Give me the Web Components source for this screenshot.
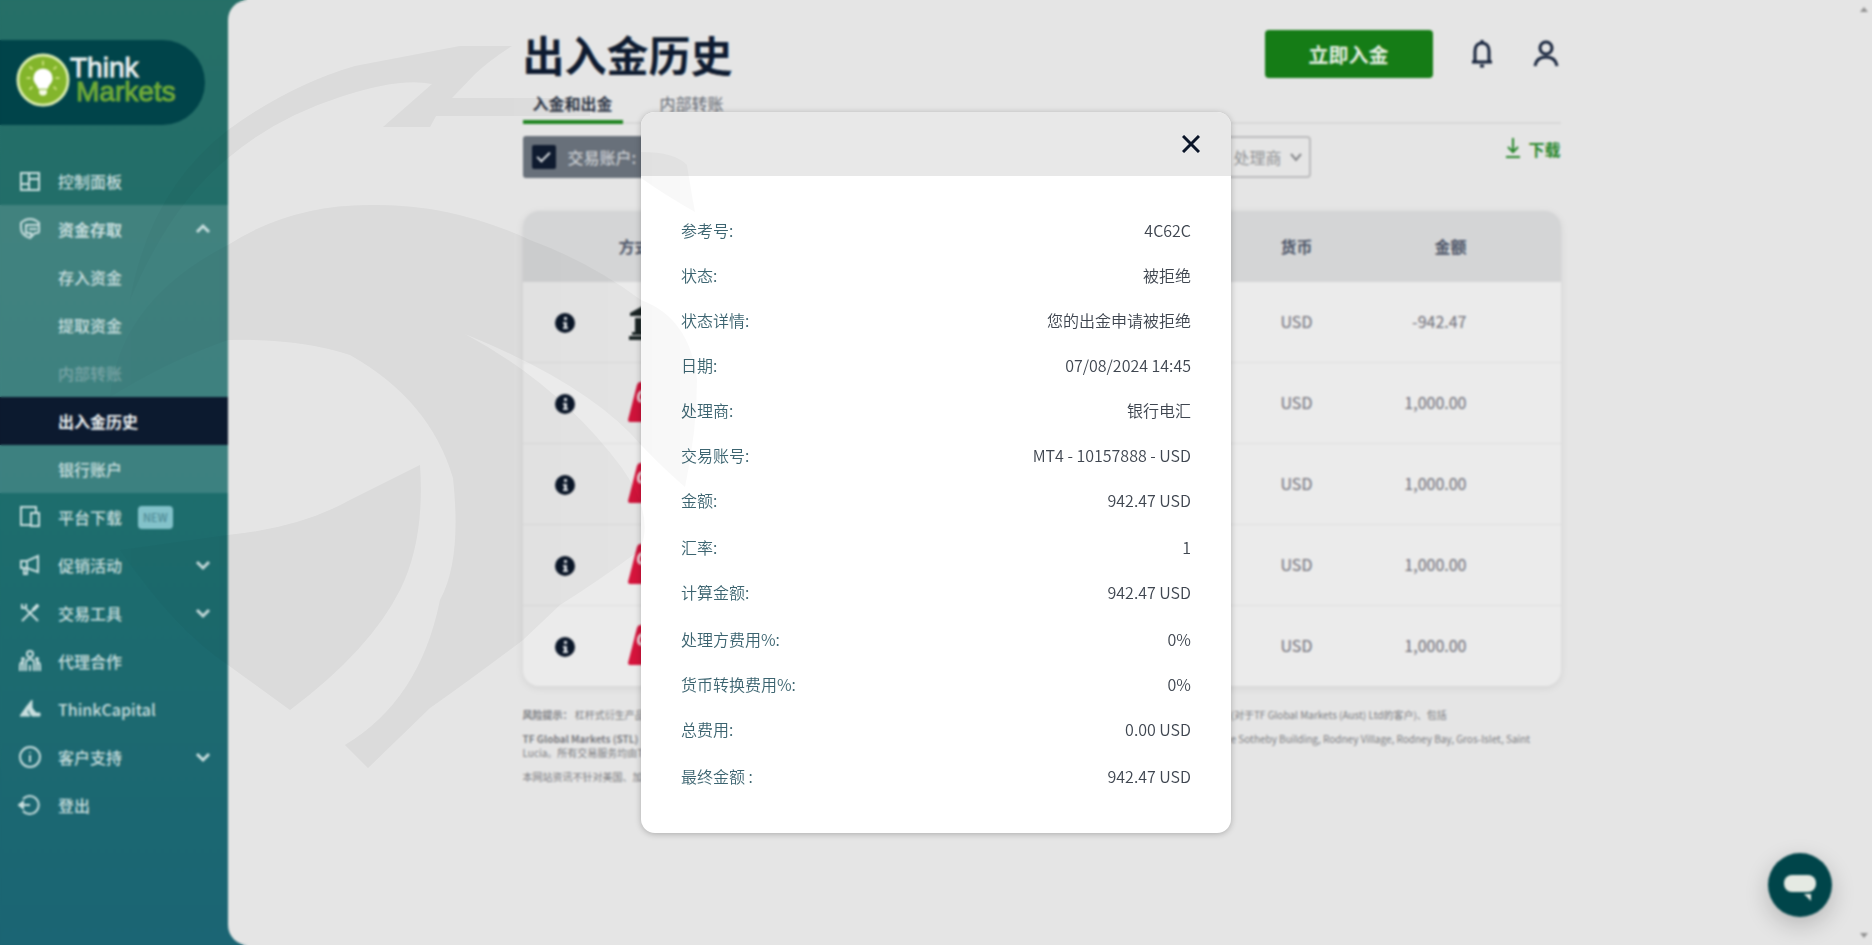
<!DOCTYPE html>
<html lang="zh-CN">
<head>
<meta charset="utf-8">
<title>出入金历史</title>
<style>
  body {
    margin: 0;
    font-family: "Noto Sans CJK SC", "Noto Sans", sans-serif;
    font-size: 16px;
    background: #206c6b;
  }
</style>
</head>
<body>
<app-shell>
  <app-sidebar slot="sidebar">
    <nav-item icon="panel" text="控制面板"></nav-item>
    <nav-item icon="funds" text="资金存取" arrow="up" group></nav-item>
    <nav-item text="存入资金" group></nav-item>
    <nav-item text="提取资金" group></nav-item>
    <nav-item text="内部转账" group disabled></nav-item>
    <nav-item text="出入金历史" active></nav-item>
    <nav-item text="银行账户" group></nav-item>
    <nav-item icon="platform" text="平台下载"><span>NEW</span></nav-item>
    <nav-item icon="promo" text="促销活动" arrow="down"></nav-item>
    <nav-item icon="tools" text="交易工具" arrow="down"></nav-item>
    <nav-item icon="people" text="代理合作"></nav-item>
    <nav-item icon="capital" text="ThinkCapital"></nav-item>
    <nav-item icon="info" text="客户支持" arrow="down"></nav-item>
    <nav-item icon="logout" text="登出"></nav-item>
  </app-sidebar>
  <page-header titulo="出入金历史"></page-header>
  <tab-bar></tab-bar>
  <filter-bar></filter-bar>
  <history-table></history-table>
  <risk-notice></risk-notice>
  <chat-button slot="chat"></chat-button>
</app-shell>

<detail-dialog>
  <detail-row label="参考号:">4C62C</detail-row>
  <detail-row label="状态:">被拒绝</detail-row>
  <detail-row label="状态详情:">您的出金申请被拒绝</detail-row>
  <detail-row label="日期:">07/08/2024 14:45</detail-row>
  <detail-row label="处理商:">银行电汇</detail-row>
  <detail-row label="交易账号:">MT4 - 10157888 - USD</detail-row>
  <detail-row label="金额:">942.47 USD</detail-row>
  <detail-row label="汇率:" spaced>1</detail-row>
  <detail-row label="计算金额:">942.47 USD</detail-row>
  <detail-row label="处理方费用%:" spaced>0%</detail-row>
  <detail-row label="货币转换费用%:">0%</detail-row>
  <detail-row label="总费用:">0.00 USD</detail-row>
  <detail-row label="最终金额 :" spaced>942.47 USD</detail-row>
</detail-dialog>
<water-mark></water-mark>

<script>
const icons = {
  panel: '<path d="M3 4h18v17H3zM11 4v17M11 10h10M3 15h8"/>',
  funds: '<path d="M12 21c-6-2-9-5-9-10V6c3-3 6-4 9-4s6 1 9 4v2M8 16V8h12q1 0 1 2v4q0 2-2 2h-2l-4 4v-4z"/><path d="M11 12h8"/>',
  platform: '<path d="M12 20H3V2h15v5M13 8h8v13h-8z"/>',
  promo: '<path d="M3 8h6l11-5v16L9 15H3zM9 8v7M6 15v6h3v-5"/>',
  tools: '<path d="M8 8l12 12M4 3v4h4V3M4 20l11-11"/><path d="M14 8l5-5 2 2-5 5z" fill="currentColor" stroke-width="1"/>',
  people: '<circle cx="12" cy="5" r="3"/><circle cx="5" cy="10" r="1"/><circle cx="19" cy="10" r="1"/><path d="M8 22v-8c0-5 8-5 8 0v8M12 22v-6M2 22v-5c0-2 1-4 3-4v9M22 22v-5c0-2-1-4-3-4v9"/>',
  capital: '<path d="M2 19L9 9l2 2-2 4 3 4zM9 9l5-6v8l4 5h4v3h-8l-3-5" fill="currentColor" stroke-width="1"/>',
  info: '<circle cx="12" cy="12" r="10"/><path d="M12 10v7M12 7v1"/>',
  logout: '<path d="M5 6a9 9 0 1 1 0 12M2 12h10"/><path d="M1 12l4-3v6z" fill="currentColor"/>'
};

class AppShell extends HTMLElement {
  constructor() {
    super();
    this.attachShadow({ mode: "open" });
    this.shadowRoot.innerHTML = `
      <style>
        :host {
          display: grid;
          grid-template-columns: 228px 1fr;
          min-height: 100vh;
          background: linear-gradient(#266f67, #1d6d6d 55%, #1b6574);
        }
        main {
          display: grid;
          grid-template-columns: 1fr 17px;
          background: #e5e5e5;
          border-radius: 20px 0 0 20px;
        }
        .content {
          width: 100%;
          max-width: 1038px;
          margin: 0 auto;
        }
        .scroll {
          display: flex;
          flex-direction: column;
          justify-content: space-between;
          align-items: center;
          padding: 6px 0;
        }
        .scroll svg { width: 8px; height: 6px; fill: #929292; }
        .chat { position: fixed; right: 40px; bottom: 28px; }
      </style>
      <slot name="sidebar"></slot>
      <main>
        <div class="content"><slot></slot></div>
        <div class="scroll">
          <svg viewBox="0 0 8 6"><path d="M0 6l4-5 4 5z"/></svg>
          <svg viewBox="0 0 8 6"><path d="M0 0l4 5 4-5z"/></svg>
        </div>
      </main>
      <div class="chat"><slot name="chat"></slot></div>
    `;
  }
}
customElements.define('app-shell', AppShell);

class AppSidebar extends HTMLElement {
  constructor() {
    super();
    this.attachShadow({ mode: "open" });
    this.shadowRoot.innerHTML = `
      <style>
        :host { display: block; }
        .logo {
          display: flex;
          align-items: center;
          box-sizing: border-box;
          width: 205px;
          height: 85px;
          margin: 40px 0 32px;
          padding: 0 0 6px 16px;
          border-radius: 0 43px 43px 0;
          background: #00444a;
        }
        .logo svg { width: 54px; height: 54px; flex: none; }
        .name {
          display: flex;
          flex-direction: column;
          font-family: "Liberation Sans", Arial, sans-serif;
          font-size: 28px;
          line-height: 24px;
          color: #e6eeee;
          -webkit-text-stroke: 1px currentColor;
        }
        .name b { color: #6fa938; font-weight: normal; margin-left: 6px; }
      </style>
      <div class="logo">
        <svg viewBox="0 0 56 56">
          <circle cx="28" cy="28" r="26" fill="#83b52b" stroke="#d9ecae" stroke-width="3"/>
          <path d="M28 16a10 10 0 0 1 10 10c0 5-4 7-5 11h-10c-1-4-5-6-5-11a10 10 0 0 1 10-10z" fill="#fff"/>
          <path d="M24 38h8v4l-2 2h-4l-2-2z" fill="#f5fae5"/>
          <path d="M28 8v5M14 14l3 3M42 14l-3 3M11 26h4M41 26h4M14 38l3-3M42 38l-3-3" stroke="#c9e07a" stroke-width="2"/>
        </svg>
        <div class="name"><span>Think</span><b>Markets</b></div>
      </div>
      <nav><slot></slot></nav>
    `;
  }
}
customElements.define('app-sidebar', AppSidebar);

class NavItem extends HTMLElement {
  constructor() {
    super();
    this.attachShadow({ mode: "open" });
  }

  connectedCallback() {
    const icon = this.getAttribute("icon");
    const arrow = this.getAttribute("arrow");
    this.shadowRoot.innerHTML = `
      <style>
        :host { display: block; color: #c9dfdf; }
        :host([group]) { background: rgba(255, 255, 255, .14); }
        :host([active]) { background: #0c1a2f; color: #eef2f4; }
        :host([disabled]) a { color: #78a3a5; }
        a {
          display: flex;
          align-items: center;
          height: 48px;
          padding: 0 16px 0 18px;
          color: inherit;
          font-weight: 500;
          text-decoration: none;
        }
        :host([active]) a, :host([arrow="up"]) a { font-weight: 700; }
        svg { fill: none; stroke: currentColor; stroke-width: 2; flex: none; }
        .icon { width: 24px; height: 24px; margin-right: 16px; }
        .arrow { width: 18px; height: 18px; margin-left: auto; stroke-width: 3; }
        ::slotted(span) {
          margin-left: 16px;
          padding: 0 5px;
          border-radius: 4px;
          background: #83c2ca;
          color: #4d8893;
          font-size: 11px;
          line-height: 23px;
        }
      </style>
      <a href="#">
        <svg class="icon" viewBox="0 0 24 24">${icon ? icons[icon] : ""}</svg>
        ${this.getAttribute("text")}
        <slot></slot>
        ${arrow ? `<svg class="arrow" viewBox="0 0 18 18"><path d="${arrow === "up" ? "M3 12l6-6 6 6" : "M3 6l6 6 6-6"}"/></svg>` : ""}
      </a>
    `;
  }
}
customElements.define('nav-item', NavItem);

class PageHeader extends HTMLElement {
  constructor() {
    super();
    this.attachShadow({ mode: "open" });
  }

  connectedCallback() {
    this.shadowRoot.innerHTML = `
      <style>
        :host {
          display: flex;
          align-items: center;
          padding-top: 24px;
          height: 60px;
        }
        h1 { margin: 0; color: #0e1b30; font-size: 42px; font-weight: 700; line-height: 60px; }
        button { border: none; font-family: inherit; cursor: pointer; }
        .deposit {
          width: 168px;
          height: 48px;
          margin: 0 34px 0 auto;
          border-radius: 4px;
          background: #157c16;
          color: #e6f0e4;
          font-size: 20px;
          font-weight: 700;
        }
        .icon { width: 30px; height: 30px; padding: 0; background: none; color: #14213a; }
        .user { margin-left: 34px; }
        svg { width: 28px; height: 30px; fill: none; stroke: currentColor; stroke-width: 3; }
      </style>
      <h1>${this.getAttribute("titulo")}</h1>
      <button class="deposit">立即入金</button>
      <button class="icon" aria-label="通知">
        <svg viewBox="0 0 28 30"><path d="M4 23h20M7 23v-11c0-5 3-8 7-8s7 3 7 8v11M14 1v3M12 27h4"/></svg>
      </button>
      <button class="icon user" aria-label="账户">
        <svg viewBox="0 0 28 30"><circle cx="14" cy="9" r="6"/><path d="M3 27c1-6 5-9 11-9s10 3 11 9"/></svg>
      </button>
    `;
  }
}
customElements.define('page-header', PageHeader);

class TabBar extends HTMLElement {
  constructor() {
    super();
    this.attachShadow({ mode: "open" });
    this.shadowRoot.innerHTML = `
      <style>
        :host {
          display: flex;
          gap: 27px;
          height: 40px;
          box-shadow: inset 0 -2px #d8d8d8;
        }
        button {
          box-sizing: border-box;
          border: solid transparent;
          border-width: 2px 0 4px;
          padding: 0 10px;
          background: none;
          font: 400 16px/32px "Noto Sans CJK SC", sans-serif;
          color: #5f6570;
        }
        .on { border-bottom-color: #1f8420; color: #2d3646; font-weight: 700; }
      </style>
      <button class="on">入金和出金</button>
      <button>内部转账</button>
    `;
  }
}
customElements.define('tab-bar', TabBar);

class FilterBar extends HTMLElement {
  constructor() {
    super();
    this.attachShadow({ mode: "open" });
    this.shadowRoot.innerHTML = `
      <style>
        :host {
          display: flex;
          margin-top: 12px;
          height: 42px;
        }
        .filters { display: flex; justify-content: space-between; width: 788px; }
        label {
          display: flex;
          align-items: center;
          gap: 12px;
          width: 240px;
          padding-left: 9px;
          border-radius: 3px;
          background: #68707a;
          color: #c9ccd0;
          font-weight: 500;
        }
        input {
          display: grid;
          place-items: center;
          appearance: none;
          width: 24px;
          height: 24px;
          margin: 0;
          border-radius: 2px;
          background: #0f1b2f;
        }
        input:checked::after {
          content: "";
          width: 11px;
          height: 5px;
          margin-bottom: 4px;
          border: solid #dfe3e6;
          border-width: 0 0 2px 2px;
          transform: rotate(-45deg);
        }
        .provider { display: grid; align-items: center; }
        .provider > * { grid-area: 1 / 1; }
        select {
          appearance: none;
          width: 90px;
          height: 42px;
          padding: 0 11px;
          border: 2px solid #bcbcbd;
          border-radius: 4px;
          background: none;
          color: #8f9193;
          font: 400 16px "Noto Sans CJK SC", sans-serif;
        }
        svg { fill: none; stroke: currentColor; stroke-width: 2; }
        .arrow { width: 14px; height: 14px; justify-self: end; margin-right: 8px; color: #85878a; pointer-events: none; }
        a {
          display: flex;
          gap: 6px;
          margin-left: auto;
          color: #258529;
          font-weight: 700;
          line-height: 26px;
          text-decoration: none;
        }
        a svg { width: 18px; height: 24px; }
      </style>
      <div class="filters">
        <label><input type="checkbox" checked>交易账户:</label>
        <div class="provider">
          <select aria-label="处理商"><option>处理商</option></select>
          <svg class="arrow" viewBox="0 0 14 14"><path d="M2 4l5 6 5-6"/></svg>
        </div>
      </div>
      <a href="#"><svg viewBox="0 0 18 24"><path d="M9 2v14M4 11l5 5 5-5M2 21h14"/></svg>下载</a>
    `;
  }
}
customElements.define('filter-bar', FilterBar);

const bank = '<svg viewBox="0 0 44 40"><path d="M2 12L22 1l20 11v3H2zM7 17h7v14H7zM18 17h8v14h-8zM30 17h7v14h-7zM4 31h36v3H4zM1 35h42v4H1z" fill="#1b2626"/></svg>';
const card = '<svg viewBox="0 0 60 40"><path d="M12 0h46q2 0 2 2l-8 36q-1 2-3 2H2q-2 0-2-2L9 3q1-3 3-3z" fill="#d5143c"/><path d="M16 10c-6-2-7 8-4 9h4" fill="none" stroke="#eed3d9" stroke-width="3"/></svg>';

class HistoryTable extends HTMLElement {
  constructor() {
    super();
    this.attachShadow({ mode: "open" });
    const rows = [
      [bank, "USD", "-942.47"],
      [card, "USD", "1,000.00"],
      [card, "USD", "1,000.00"],
      [card, "USD", "1,000.00"],
      [card, "USD", "1,000.00"]
    ];
    this.shadowRoot.innerHTML = `
      <style>
        :host {
          display: block;
          margin-top: 33px;
          border-radius: 16px;
          overflow: hidden;
          background: #ebebeb;
          box-shadow: 0 2px 8px rgba(0, 0, 0, .08);
        }
        table { width: 100%; border-collapse: collapse; table-layout: fixed; }
        th {
          height: 69px;
          padding: 0 0 2px;
          background: #d4d5d6;
          color: #4d5568;
          font-weight: 700;
          text-align: left;
        }
        td { height: 78px; padding: 0 0 2px; border-bottom: 1px solid #dedede; color: #6f6f78; }
        tr:last-child td { border-bottom: none; }
        .info { width: 84px; text-align: center; }
        th.method { padding-left: 12px; }
        td.method { padding-left: 21px; }
        .currency { width: 110px; }
        .amount { width: 76px; padding-right: 94px; text-align: right; }
        td svg { display: block; height: 40px; }
        button { padding: 0; border: none; background: none; vertical-align: middle; }
        button svg { width: 20px; height: 20px; }
      </style>
      <table>
        <thead>
          <tr><th class="info"></th><th class="method">方式</th><th class="currency">货币</th><th class="amount">金额</th></tr>
        </thead>
        <tbody>
          ${rows.map(([method, currency, amount]) => `
            <tr>
              <td class="info">
                <button aria-label="详情"><svg viewBox="0 0 20 20"><circle cx="10" cy="10" r="10" fill="#0b1729"/><path d="M9 4h3v3H9zM8 9h4v5h1v2H8v-2h1v-3H8z" fill="#d5d9de"/></svg></button>
              </td>
              <td class="method">${method}</td>
              <td class="currency">${currency}</td>
              <td class="amount">${amount}</td>
            </tr>`).join("")}
        </tbody>
      </table>
    `;
  }
}
customElements.define('history-table', HistoryTable);

class RiskNotice extends HTMLElement {
  constructor() {
    super();
    this.attachShadow({ mode: "open" });
    this.shadowRoot.innerHTML = `
      <style>
        :host {
          display: grid;
          grid-template-columns: 1fr 330px;
          gap: 10px 0;
          margin-top: 22px;
          font-size: 10px;
          line-height: 14px;
          color: #7c7d82;
        }
        p { margin: 0; }
      </style>
      <p><b>风险提示：</b> 杠杆式衍生产品</p>
      <p>(对于TF Global Markets (Aust) Ltd的客户)、包括</p>
      <p><b>TF Global Markets (STL)</b><br>Lucia。所有交易服务均由T</p>
      <p>e Sotheby Building, Rodney Village, Rodney Bay, Gros-Islet, Saint</p>
      <p>本网站资讯不针对美国、加</p>
    `;
  }
}
customElements.define('risk-notice', RiskNotice);

class ChatButton extends HTMLElement {
  constructor() {
    super();
    this.attachShadow({ mode: "open" });
    this.shadowRoot.innerHTML = `
      <style>
        :host { display: block; }
        button {
          display: block;
          width: 64px;
          height: 64px;
          padding: 0;
          border: none;
          border-radius: 50%;
          background: #00454a;
          box-shadow: 0 8px 24px rgba(0, 0, 0, .2);
        }
        svg { display: block; width: 64px; height: 64px; }
      </style>
      <button aria-label="在线客服">
        <svg viewBox="0 0 64 64"><rect x="16" y="22" width="32" height="17" rx="8" fill="#e5eae3"/><path d="M36 41h7v7z" fill="#e5eae3"/></svg>
      </button>
    `;
  }
}
customElements.define('chat-button', ChatButton);

class DetailDialog extends HTMLElement {
  constructor() {
    super();
    this.attachShadow({ mode: "open" });
    this.shadowRoot.innerHTML = `
      <style>
        :host {
          display: flex;
          justify-content: center;
          align-items: flex-start;
          position: fixed;
          inset: 0;
          padding-top: 112px;
          backdrop-filter: blur(1px);
        }
        section {
          width: 590px;
          border-radius: 14px;
          overflow: hidden;
          background: #fff;
          box-shadow: 0 1px 6px rgba(0, 0, 0, .25);
        }
        header {
          display: flex;
          justify-content: flex-end;
          align-items: center;
          height: 64px;
          padding-right: 31px;
          background: #e8e8e8;
        }
        button { padding: 0; border: none; background: none; cursor: pointer; }
        svg { display: block; width: 18px; height: 18px; stroke: #0a1528; stroke-width: 3; }
        .rows { padding: 32px 40px 34px; }
      </style>
      <section role="dialog" aria-modal="true">
        <header>
          <button aria-label="关闭"><svg viewBox="0 0 18 18"><path d="M1 1l16 16M17 1L1 17"/></svg></button>
        </header>
        <div class="rows"><slot></slot></div>
      </section>
    `;
    this.shadowRoot.querySelector("button").addEventListener("click", () => this.remove());
  }
}
customElements.define('detail-dialog', DetailDialog);

class DetailRow extends HTMLElement {
  constructor() {
    super();
    this.attachShadow({ mode: "open" });
  }

  connectedCallback() {
    this.shadowRoot.innerHTML = `
      <style>
        :host {
          display: flex;
          justify-content: space-between;
          font-weight: 350;
          line-height: 45px;
          color: #3f4650;
        }
        :host([spaced]) { padding-top: 2px; }
        .label { color: #3c6470; }
      </style>
      <span class="label">${this.getAttribute("label")}</span>
      <span><slot></slot></span>
    `;
  }
}
customElements.define('detail-row', DetailRow);

// faint brand drawing laid over the whole page
class WaterMark extends HTMLElement {
  constructor() {
    super();
    this.attachShadow({ mode: "open" });
    this.shadowRoot.innerHTML = `
      <style>
        :host { position: fixed; left: 0; top: 0; pointer-events: none; }
        svg { display: block; width: 720px; height: 800px; fill: url(#tone); }
      </style>
      <svg viewBox="0 0 720 800">
        <linearGradient id="tone" gradientUnits="userSpaceOnUse" x1="0" y1="0" x2="720" y2="0">
          <stop offset="0" stop-opacity="0"/>
          <stop offset=".31" stop-opacity=".03"/>
          <stop offset=".32" stop-opacity=".045"/>
          <stop offset=".7" stop-opacity=".042"/>
          <stop offset=".9" stop-opacity=".03"/>
          <stop offset="1" stop-opacity=".02"/>
        </linearGradient>
        <path d="M228 130Q290 85 355 66L460 46H512Q490 60 475 74L452 98H590V116H436L430 127H383L432 84Q400 77 340 97Q275 118 228 158Q170 205 130 300Q150 190 228 130z"/>
        <path d="M641 152Q675 152 687 165Q690 185 695 212Q665 195 641 178z"/>
        <path d="M228 245Q290 205 370 205Q450 203 530 240Q590 262 641 300Q690 318 697 380Q697 430 685 487Q665 470 641 445Q590 385 465 334Q560 385 622 468Q655 515 640 550Q600 580 560 605L523 640Q470 680 430 708L368 768L345 745Q420 700 440 600Q462 560 453 478Q430 400 350 355Q300 338 228 340Q170 360 110 397Q120 300 228 245z"/>
        <path d="M228 535Q300 528 350 500L420 465Q425 540 400 590Q370 650 290 710L228 665Q175 630 120 550z"/>
      </svg>
    `;
  }
}
customElements.define('water-mark', WaterMark);
</script>
</body>
</html>
